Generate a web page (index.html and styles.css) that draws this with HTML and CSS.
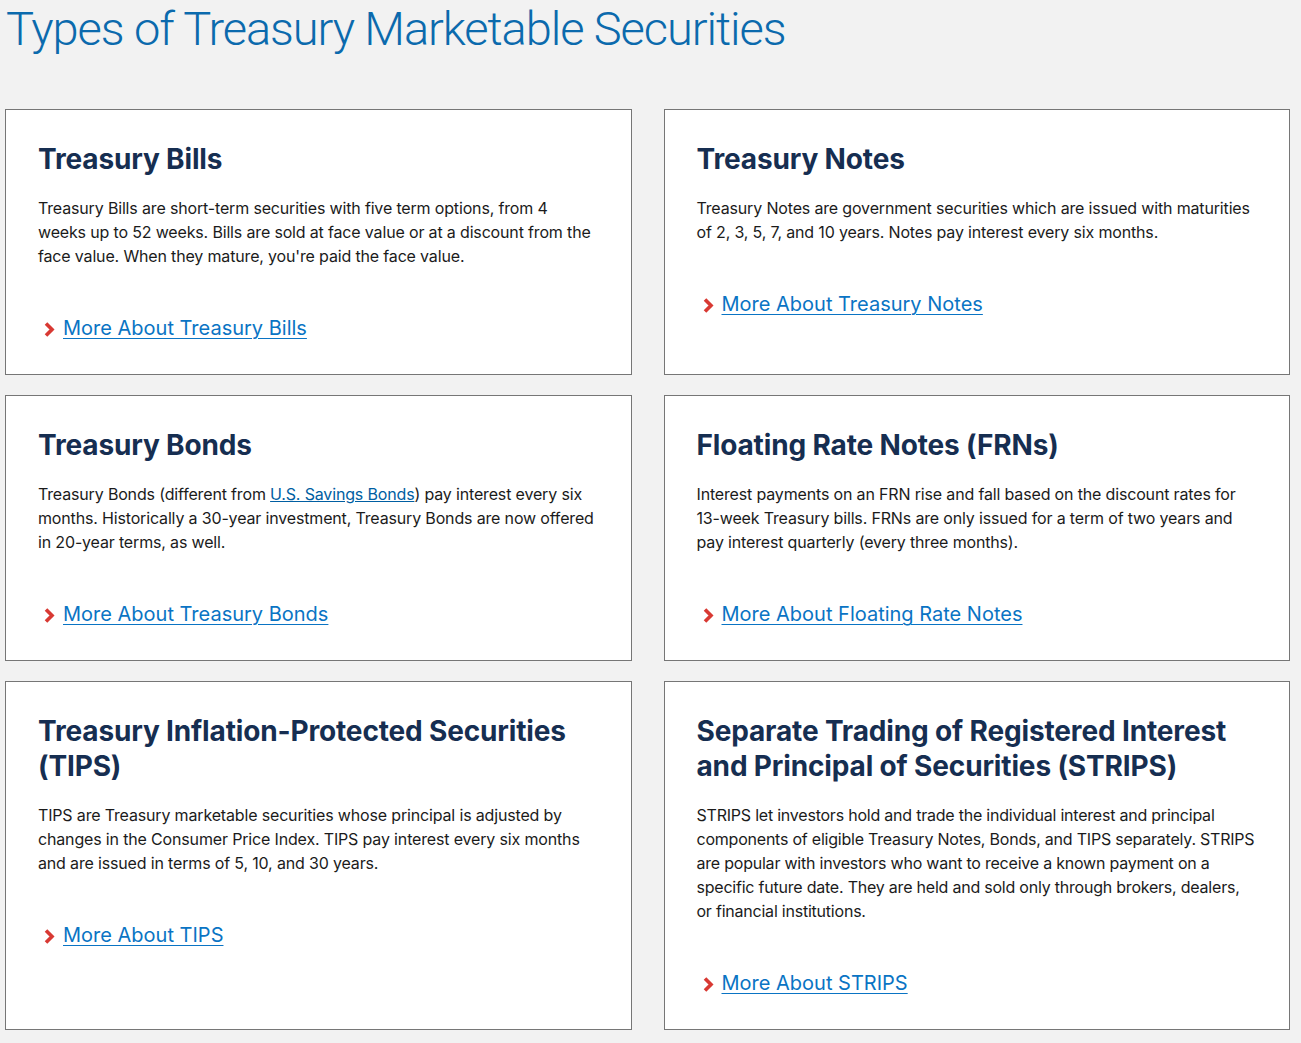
FILE: index.html
```html
<!DOCTYPE html>
<html lang="en">
<head>
<meta charset="utf-8">
<title>Types of Treasury Marketable Securities</title>
<link rel="stylesheet" href="styles.css">
</head>
<body>
<h1 class="page-title">Types of Treasury Marketable Securities</h1>
<div class="grid">
  <div class="card">
    <h2 class="card-title">Treasury Bills</h2>
    <p class="card-text">Treasury Bills are short-term securities with five term options, from 4 weeks up to 52 weeks. Bills are sold at face value or at a discount from the face value. When they mature, you're paid the face value.</p>
    <a class="more" href="#"><svg class="chev" viewBox="0 0 11 15" width="11" height="15"><path d="M2 1.5 L8 7.5 L2 13.5" fill="none" stroke="#d83933" stroke-width="3.6"/></svg><span>More About Treasury Bills</span></a>
  </div>
  <div class="card">
    <h2 class="card-title">Treasury Notes</h2>
    <p class="card-text">Treasury Notes are government securities which are issued with maturities of 2, 3, 5, 7, and 10 years. Notes pay interest every six months.</p>
    <a class="more" href="#"><svg class="chev" viewBox="0 0 11 15" width="11" height="15"><path d="M2 1.5 L8 7.5 L2 13.5" fill="none" stroke="#d83933" stroke-width="3.6"/></svg><span>More About Treasury Notes</span></a>
  </div>
  <div class="card">
    <h2 class="card-title">Treasury Bonds</h2>
    <p class="card-text">Treasury Bonds (different from <a class="inline" href="#">U.S. Savings Bonds</a>) pay interest every six months. Historically a 30-year investment, Treasury Bonds are now offered in 20-year terms, as well.</p>
    <a class="more" href="#"><svg class="chev" viewBox="0 0 11 15" width="11" height="15"><path d="M2 1.5 L8 7.5 L2 13.5" fill="none" stroke="#d83933" stroke-width="3.6"/></svg><span>More About Treasury Bonds</span></a>
  </div>
  <div class="card">
    <h2 class="card-title">Floating Rate Notes (FRNs)</h2>
    <p class="card-text">Interest payments on an FRN rise and fall based on the discount rates for 13-week Treasury bills. FRNs are only issued for a term of two years and pay interest quarterly (every three months).</p>
    <a class="more" href="#"><svg class="chev" viewBox="0 0 11 15" width="11" height="15"><path d="M2 1.5 L8 7.5 L2 13.5" fill="none" stroke="#d83933" stroke-width="3.6"/></svg><span>More About Floating Rate Notes</span></a>
  </div>
  <div class="card">
    <h2 class="card-title">Treasury Inflation-Protected Securities (TIPS)</h2>
    <p class="card-text">TIPS are Treasury marketable securities whose principal is adjusted by changes in the Consumer Price Index. TIPS pay interest every six months and are issued in terms of 5, 10, and 30 years.</p>
    <a class="more" href="#"><svg class="chev" viewBox="0 0 11 15" width="11" height="15"><path d="M2 1.5 L8 7.5 L2 13.5" fill="none" stroke="#d83933" stroke-width="3.6"/></svg><span>More About TIPS</span></a>
  </div>
  <div class="card">
    <h2 class="card-title">Separate Trading of Registered Interest and Principal of Securities (STRIPS)</h2>
    <p class="card-text card-text-tight">STRIPS let investors hold and trade the individual interest and principal components of eligible Treasury Notes, Bonds, and TIPS separately. STRIPS are popular with investors who want to receive a known payment on a specific future date. They are held and sold only through brokers, dealers, or financial institutions.</p>
    <a class="more" href="#"><svg class="chev" viewBox="0 0 11 15" width="11" height="15"><path d="M2 1.5 L8 7.5 L2 13.5" fill="none" stroke="#d83933" stroke-width="3.6"/></svg><span>More About STRIPS</span></a>
  </div>
</div>
</body>
</html>
```
FILE: styles.css
```css
html, body {
  margin: 0;
  padding: 0;
  background: #f2f2f2;
}
body {
  font-family: Inter, Roboto, "Liberation Sans", sans-serif;
  color: #1b1b1b;
  padding: 0 11px 0 5px;
}
.page-title {
  margin: 0;
  padding: 0 0 0 1px;
  height: 109px;
  font-family: Roboto, sans-serif;
  font-weight: 300;
  font-size: 47px;
  line-height: 58px;
  color: #0b6aad;
  letter-spacing: -1.08px;
}
.grid {
  display: grid;
  grid-template-columns: 1fr 1fr;
  column-gap: 32px;
  row-gap: 20px;
}
.card {
  background: #fff;
  border: 1px solid #767676;
  padding: 32px;
  display: flex;
  flex-direction: column;
  align-items: flex-start;
}
.card-title {
  margin: 0 0 19px;
  font-family: Inter, Roboto, sans-serif;
  font-weight: 700;
  font-size: 28px;
  line-height: 35px;
  color: #162e51;
  letter-spacing: -0.15px;
}
.card-text {
  margin: 0 0 46px;
  font-size: 16px;
  line-height: 24px;
  color: #1b1b1b;
  letter-spacing: -0.16px;
}
.card-text-tight {
  letter-spacing: -0.22px;
}
.inline {
  color: #005ea2;
  text-decoration: underline;
}
.more {
  display: flex;
  align-items: center;
  font-size: 20px;
  line-height: 28px;
  color: #0a74c4;
  text-decoration: none;
  padding-left: 6px;
}
.more span {
  text-decoration: underline;
  text-underline-offset: 3px;
  text-decoration-thickness: 1px;
}
.chev {
  display: block;
  margin-right: 8px;
  margin-top: 3px;
}
```
